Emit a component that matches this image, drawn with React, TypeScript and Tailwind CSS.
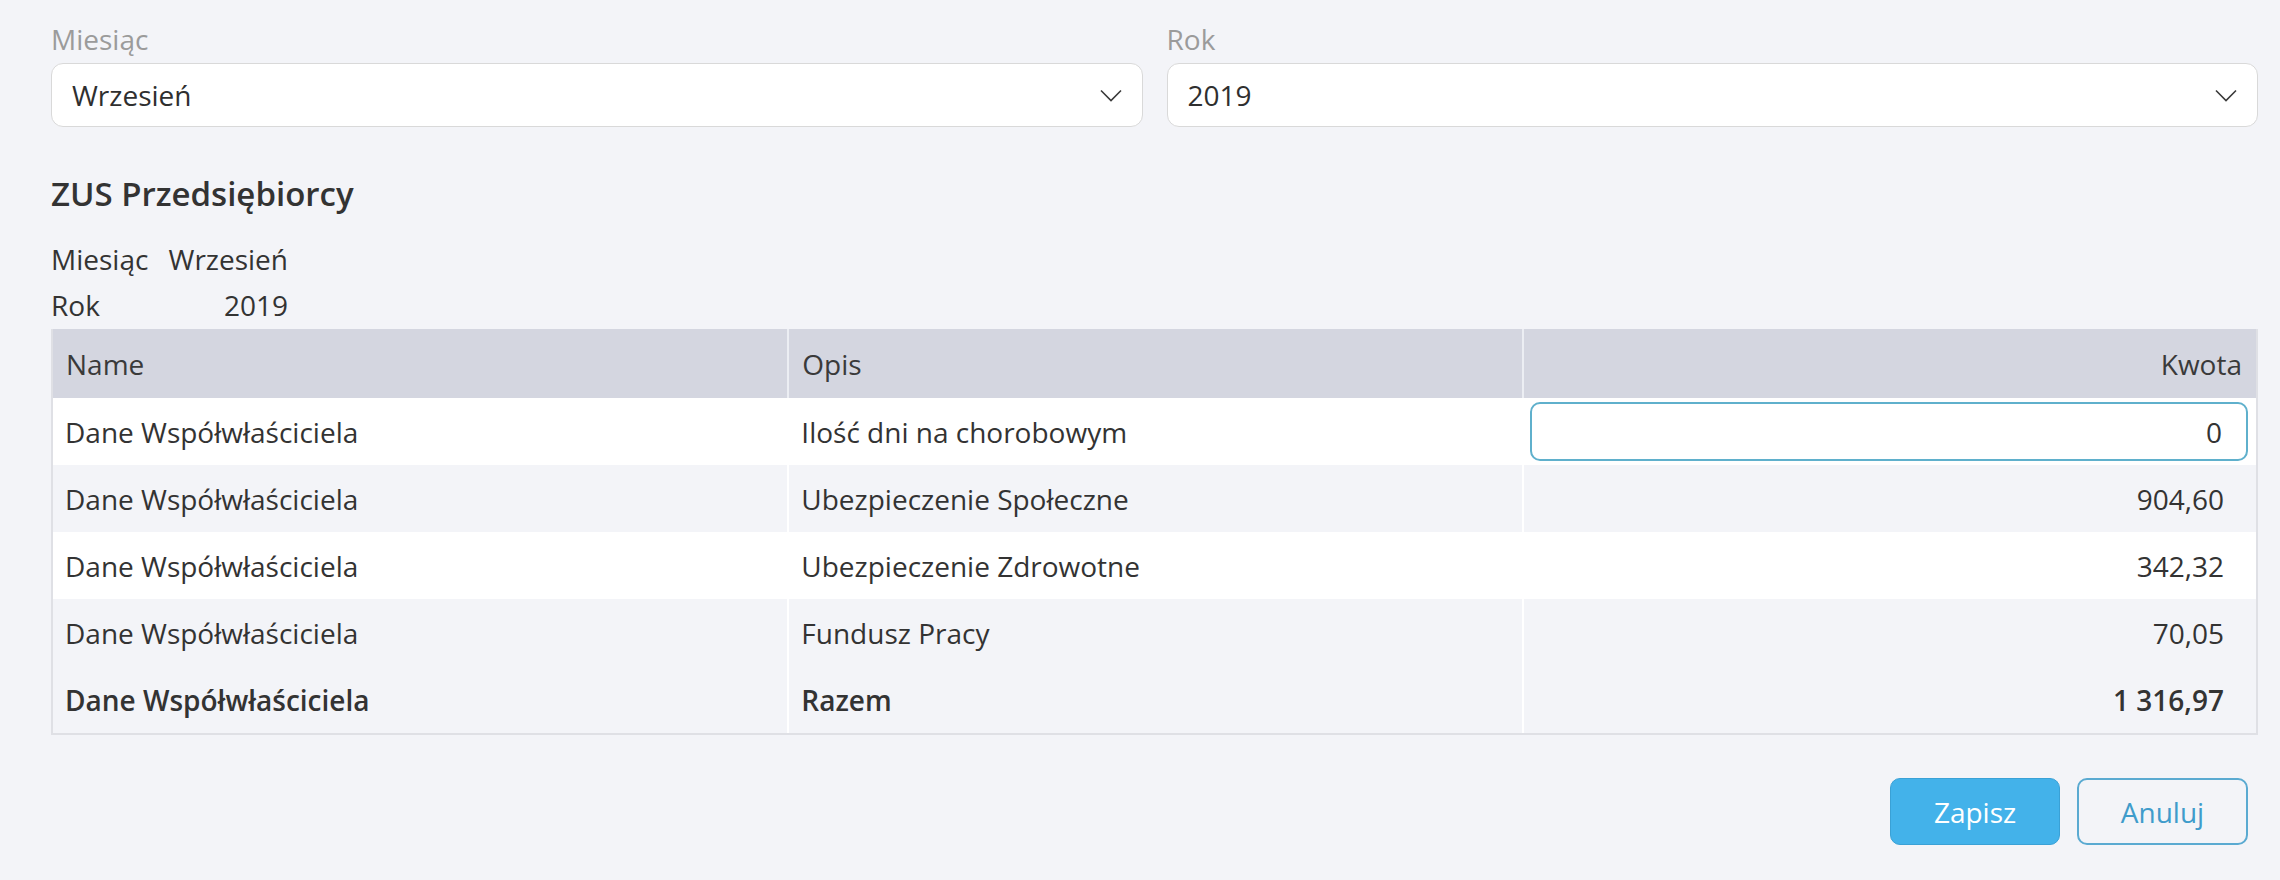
import { useState } from 'react';

type Row = { name: string; opis: string; kwota?: string; editable?: boolean; bold?: boolean };

const rows: Row[] = [
  { name: 'Dane Współwłaściciela', opis: 'Ilość dni na chorobowym', editable: true },
  { name: 'Dane Współwłaściciela', opis: 'Ubezpieczenie Społeczne', kwota: '904,60' },
  { name: 'Dane Współwłaściciela', opis: 'Ubezpieczenie Zdrowotne', kwota: '342,32' },
  { name: 'Dane Współwłaściciela', opis: 'Fundusz Pracy', kwota: '70,05' },
  { name: 'Dane Współwłaściciela', opis: 'Razem', kwota: '1 316,97', bold: true },
];

function Chevron() {
  return (
    <svg width="22" height="13" viewBox="0 0 22 13" fill="none" className="shrink-0">
      <polyline points="1,1.5 11,11.5 21,1.5" stroke="#3a3a3a" strokeWidth="1.6" />
    </svg>
  );
}

function SelectBox({ label, value }: { label: string; value: string }) {
  return (
    <div>
      <div className="text-[28px] leading-[38px] text-[#9b9b9b] mb-[5px]">{label}</div>
      <div className="h-[64px] rounded-[12px] border-[1.5px] border-[#d9d9d9] bg-white flex items-center justify-between pl-[20px] pr-[20px]">
        <span className="text-[28px] leading-[38px] text-[#2f2f2f]">{value}</span>
        <Chevron />
      </div>
    </div>
  );
}

export default function App() {
  const [dni, setDni] = useState('0');

  return (
    <div
      className="min-h-screen bg-[#f3f4f8] pl-[51px] pr-[22px] pt-[20px] text-[#333]"
      style={{ fontFamily: '"Open Sans", "Noto Sans", sans-serif' }}
    >
      <div className="grid grid-cols-2 gap-[24px]">
        <SelectBox label="Miesiąc" value="Wrzesień" />
        <SelectBox label="Rok" value="2019" />
      </div>

      <h2 className="mt-[46px] text-[33px] leading-[42px] font-semibold text-[#333]">ZUS Przedsiębiorcy</h2>

      <div className="mt-[21px] grid grid-cols-[112px_125px] text-[28px] leading-[46px]">
        <span>Miesiąc</span>
        <span className="text-right">Wrzesień</span>
        <span>Rok</span>
        <span className="text-right">2019</span>
      </div>

      <div className="mt-[1px] border-x-2 border-b-2 border-[#dfe0e5] text-[28px] leading-[38px]">
        <div className="grid grid-cols-3 h-[69px] bg-[#d4d6e0] text-[#3a3a3a]">
          <div className="flex items-center px-[13px]">Name</div>
          <div className="flex items-center px-[13px] border-l-2 border-[#eceef3]">Opis</div>
          <div className="flex items-center justify-end pr-[14px] border-l-2 border-[#eceef3]">Kwota</div>
        </div>
        {rows.map((r, i) => (
          <div
            key={i}
            className={
              'grid grid-cols-3 h-[67px] ' +
              (i % 2 === 0 && i < 4 ? 'bg-white' : 'bg-[#f3f4f8]') +
              (r.bold ? ' font-semibold text-[#333]' : ' text-[#333]')
            }
          >
            <div className="flex items-center px-[12px]">{r.name}</div>
            <div className="flex items-center px-[12px] border-l-2 border-white">{r.opis}</div>
            <div className="flex items-center justify-end border-l-2 border-white pr-[32px]">
              {r.editable ? (
                <div className="flex-1 ml-[6px] mr-[-24px] h-[59px] rounded-[10px] border-2 border-[#5fb0cc] bg-white flex items-center justify-end pr-[24px]">
                  <input
                    className="w-full text-right bg-transparent outline-none text-[28px] text-[#333]"
                    value={dni}
                    onChange={e => setDni(e.target.value)}
                  />
                </div>
              ) : (
                r.kwota
              )}
            </div>
          </div>
        ))}
      </div>

      <div className="mt-[43px] flex justify-end gap-[17px] pr-[10px]">
        <button className="w-[170px] h-[67px] rounded-[10px] bg-[#43b2ea] border-[1.5px] border-[#3aa1d6] text-white text-[28px]">
          Zapisz
        </button>
        <button className="w-[171px] h-[67px] rounded-[10px] border-2 border-[#5aaad1] text-[#3f9ccb] text-[28px]">
          Anuluj
        </button>
      </div>
    </div>
  );
}
